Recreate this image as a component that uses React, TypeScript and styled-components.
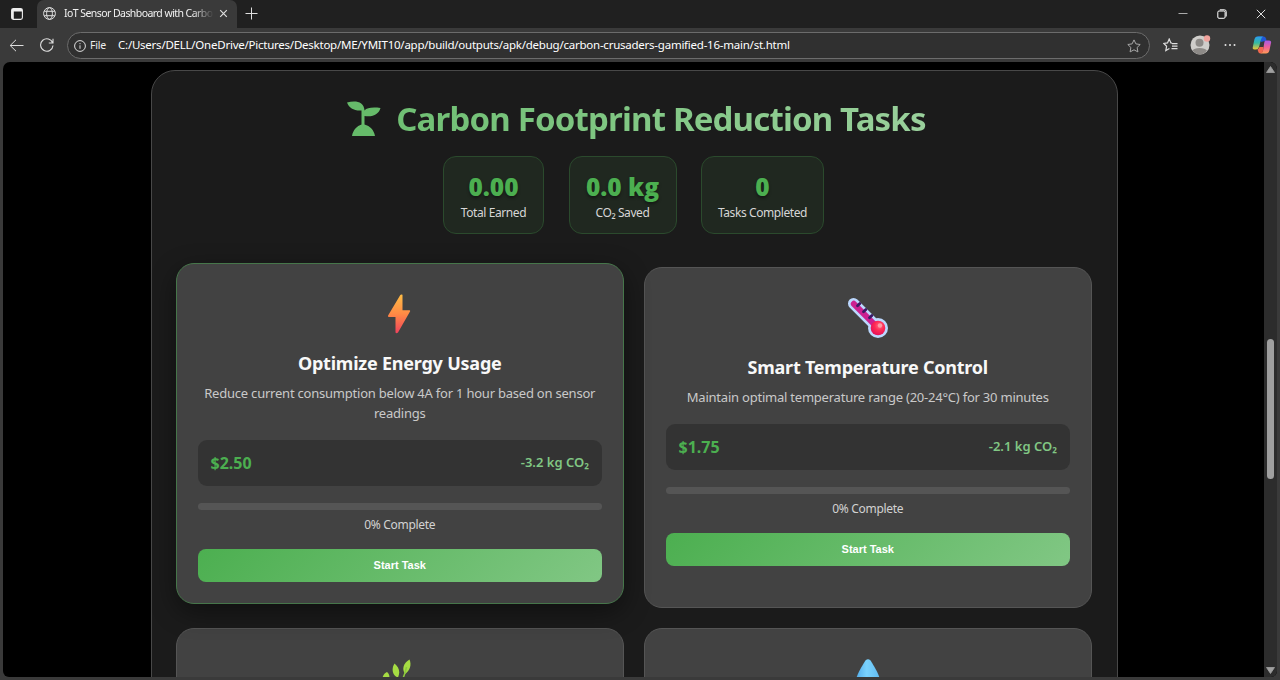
import React from "react";
import styled, { createGlobalStyle } from "styled-components";

const Global = createGlobalStyle`
  *, *::before, *::after { box-sizing: border-box; }
  html, body { margin: 0; padding: 0; background: #3b3b3b; overflow: hidden; }
  body { font-family: "Noto Sans", "Open Sans", sans-serif; color: #fff; }
  svg { display: block; flex: none; }
`;

const Window = styled.div`
  width: 1280px;
  height: 680px;
  display: flex;
  flex-direction: column;
  background: #3a3a3a;
  overflow: hidden;
`;

const TabStrip = styled.div`
  height: 28px;
  flex: none;
  display: flex;
  align-items: stretch;
  background: #202020;
`;

const TabMenu = styled.div`
  width: 37px;
  display: flex;
  align-items: center;
  padding-left: 11px;
`;

const Tab = styled.div`
  width: 200px;
  display: flex;
  align-items: center;
  padding: 0 9px 1px 6px;
  background: #3a3a3a;
  border-radius: 7px 7px 0 0;
`;

const TabTitle = styled.div`
  width: 149px;
  margin: 0 0 1px 8px;
  overflow: hidden;
  white-space: nowrap;
  font-size: 10.5px;
  line-height: 16px;
  letter-spacing: -0.56px;
  color: #f2f2f2;
  mask-image: linear-gradient(90deg, #000 128px, transparent 150px);
`;

const TabClose = styled.div`
  margin-left: auto;
`;

const NewTab = styled.div`
  display: flex;
  align-items: center;
  padding: 0 0 1px 8px;
`;

const WindowControls = styled.div`
  margin-left: auto;
  display: flex;
  align-items: center;
  gap: 29px;
  padding-right: 14px;
`;

const Toolbar = styled.div`
  height: 34px;
  flex: none;
  display: flex;
  align-items: center;
  padding-left: 9px;
`;

const AddressBar = styled.div`
  width: 1083px;
  height: 27px;
  margin: 1px 0 0 12px;
  display: flex;
  align-items: center;
  padding: 0 8px 0 6px;
  border: 1px solid #6c6c6c;
  border-radius: 14px;
  background: #303030;
`;

const Scheme = styled.span`
  width: 28px;
  margin: 0 0 1px 4px;
  font-size: 10.5px;
  letter-spacing: -0.2px;
  line-height: 18px;
  color: #ededed;
`;

const Url = styled.span`
  flex: 1;
  margin-bottom: 1px;
  font-size: 11.5px;
  line-height: 18px;
  letter-spacing: -0.237px;
  white-space: nowrap;
  color: #fff;
`;

const ToolbarActions = styled.div`
  display: flex;
  align-items: center;
  margin-left: 13px;
`;

const Avatar = styled.div`
  margin-left: 12px;
`;

const More = styled.div`
  margin-left: 13px;
`;

const Assistant = styled.div`
  margin-left: 16px;
`;

const Viewport = styled.div`
  height: 615px;
  margin: 0 3px;
  display: flex;
  background: #000;
  border-radius: 7px 7px 6px 6px;
  overflow: hidden;
`;

const Page = styled.main`
  flex: 1;
  padding: 8px 0 0 148px;
  overflow: hidden;
`;

const Scrollbar = styled.div`
  width: 13px;
  display: flex;
  flex-direction: column;
  align-items: center;
  padding: 4px 0 3px;
  background: #2c2c2c;
`;

const Thumb = styled.div`
  width: 7px;
  height: 140px;
  margin: 266px 0 auto;
  border-radius: 4px;
  background: #9f9f9f;
`;

const Panel = styled.section`
  width: 967px;
  height: 700px;
  padding: 23px 25px 0 24px;
  border: 1px solid #484848;
  border-radius: 24px;
  background: #1b1b1b;
`;

const Heading = styled.h1`
  margin: 0;
  height: 49px;
  display: flex;
  justify-content: center;
  align-items: center;
  gap: 15px;
  padding-left: 5px;
  font-size: 33px;
  line-height: 48px;
  font-weight: 700;
  letter-spacing: -0.83px;
  white-space: nowrap;
`;

const HeadingText = styled.span`
  color: transparent;
  background: linear-gradient(100deg, #6fbf73 0%, #81c784 45%, #9ad09c 100%);
  background-clip: text;
  -webkit-background-clip: text;
`;

const Stats = styled.div`
  display: flex;
  justify-content: center;
  gap: 24.5px;
  margin-top: 13px;
  padding-right: 1px;
`;

const Stat = styled.div<{ $width: number }>`
  width: ${(p) => p.$width}px;
  height: 78px;
  padding-top: 13px;
  text-align: center;
  border: 1px solid #2b4a2d;
  border-radius: 13px;
  background: #202820;
`;

const StatValue = styled.div`
  font-family: "Open Sans", sans-serif;
  font-size: 24.5px;
  line-height: 34px;
  font-weight: 800;
  color: #4caf50;
  text-shadow: 0 2px 3px rgba(0, 0, 0, 0.4);
`;

const StatLabel = styled.div`
  font-size: 12px;
  line-height: 17px;
  letter-spacing: -0.42px;
  color: #d6d6d6;
`;

const Grid = styled.div`
  display: grid;
  grid-template-columns: 448px 448px;
  grid-auto-rows: 341px;
  gap: 20px;
  margin-top: 33px;
`;

const Card = styled.article<{ $raised?: boolean }>`
  padding: 20px 21px 20px 20.5px;
  text-align: center;
  border: 1px solid ${(p) => (p.$raised ? "#46764a" : "#555")};
  border-radius: 18px;
  background: #424242;
  box-shadow: ${(p) => (p.$raised ? "0 8px 26px rgba(0, 0, 0, 0.42)" : "none")};
  transform: ${(p) => (p.$raised ? "translateY(-4px)" : "none")};
`;

const CardIcon = styled.div`
  height: 60px;
  display: flex;
  justify-content: center;
  align-items: center;
`;

const CardTitle = styled.h3`
  margin: 6px 0 0;
  font-size: 18px;
  line-height: 26px;
  font-weight: 700;
  letter-spacing: -0.22px;
  color: #f8f8f8;
`;

const CardText = styled.p`
  margin: 7px 0 0;
  font-size: 13px;
  line-height: 20px;
  letter-spacing: -0.22px;
  color: #c9c9c9;
`;

const Reward = styled.div`
  height: 46px;
  margin-top: 17px;
  padding: 0 13px 0 13px;
  display: flex;
  justify-content: space-between;
  align-items: center;
  border-radius: 9px;
  background: #333;
`;

const Price = styled.span`
  font-size: 16px;
  line-height: 22px;
  font-weight: 700;
  color: #4caf50;
`;

const Saving = styled.span`
  margin-bottom: 2px;
  font-size: 13px;
  line-height: 18px;
  font-weight: 600;
  color: #81c784;
`;

const Track = styled.div`
  height: 7px;
  margin-top: 17px;
  border-radius: 4px;
  background: #555;
`;

const Status = styled.div`
  margin-top: 6px;
  font-size: 12px;
  line-height: 18px;
  letter-spacing: -0.31px;
  color: #d2d2d2;
`;

const StartButton = styled.button`
  display: block;
  width: 100%;
  height: 33px;
  margin-top: 15px;
  padding: 0 0 1px;
  border: 0;
  border-radius: 8px;
  background: linear-gradient(135deg, #4caf50, #81c784);
  color: #fff;
  font: 700 11px "Liberation Sans", sans-serif;
`;

const Sprout = () => (
  <svg width="34" height="36" viewBox="0 0 34 36">
    <path
      fill="#66bb6a"
      d="M0 1.500C8-.5 17 0 17.500 9.500C20 6.500 26 6 33.500 7C32 13 26 16.500 17.500 15V23.500C23 25 27 29 28 35H5C6 29 10 25 14.500 23.500V9.500C7 10 2 7 0 1.500Z"
    />
  </svg>
);

const Bolt = () => (
  <svg width="26" height="40" viewBox="0 0 26 40">
    <defs>
      <linearGradient id="bolt" x1="0" y1="0" x2="0" y2="1">
        <stop offset="0" stopColor="#ffbd45" />
        <stop offset=".5" stopColor="#ff8a45" />
        <stop offset="1" stopColor="#f0425c" />
      </linearGradient>
    </defs>
    <path
      fill="url(#bolt)"
      d="M13 1.500Q14-.3 15.500 .8V16.300H22.500Q23.500 16.500 23 17.600L11 38.500Q9.500 40 8.500 38.600V23H1.700Q.5 22.600 1.100 21.400Z"
    />
  </svg>
);

const Thermometer = () => (
  <svg width="42" height="42" viewBox="0 0 42 42">
    <defs>
      <radialGradient id="bulb" cx=".6" cy=".35" r=".65">
        <stop offset="0" stopColor="#ff6f85" />
        <stop offset=".5" stopColor="#ff2a55" />
        <stop offset="1" stopColor="#e51259" />
      </radialGradient>
    </defs>
    <path d="M6.500 6.500L27 27" stroke="#bcd8ff" strokeWidth="11" strokeLinecap="round" />
    <circle cx="31" cy="31" r="10" fill="#bcd8ff" />
    <path d="M6.800 6.800L28 28" stroke="#cb2190" strokeWidth="6" strokeLinecap="round" />
    <circle cx="31" cy="31" r="7.300" fill="url(#bulb)" />
    <circle cx="33" cy="28.500" r="2.200" fill="#ff9aa6" />
    <path d="M10.500 8.800l2.400-2.400M16.500 14.800l2.400-2.400M22.500 20.800l2.400-2.400" stroke="#3b1a66" strokeWidth="2.800" strokeLinecap="round" />
  </svg>
);

const Herb = () => (
  <svg width="40" height="40" viewBox="0 0 40 40">
    <g fill="#a6dc43">
      <path d="M29.500 .5C32 6 29.500 12 25 15C21.500 10 23.500 4 29.500 .5Z" />
      <path d="M14.500 4.500C19 8 20.500 13 18 18.500C12.500 17 11 10 14.500 4.500Z" />
      <path d="M2.500 19C3 15.500 5 14 7 13C9.500 15 10 18 9 22Z" />
      <path d="M24 24C29 19 35 19 38 21C35 26 29 27 24 24Z" />
      <path d="M6 29C11 25 16 26 18 29C14 33 9 33 6 29Z" />
    </g>
    <path d="M26.500 8C25 16 21 28 7 39" fill="none" stroke="#8cc83e" strokeWidth="1.500" />
  </svg>
);

const Drop = () => (
  <svg width="40" height="40" viewBox="0 0 40 40">
    <defs>
      <linearGradient id="drop" x1="0" y1="0" x2="1" y2="0">
        <stop offset="0" stopColor="#4fa9e8" />
        <stop offset=".45" stopColor="#7ad2fd" />
        <stop offset="1" stopColor="#5fb9ef" />
      </linearGradient>
    </defs>
    <path fill="url(#drop)" d="M17.500 1.500Q20-.8 22.500 1.500C25.500 6 33 18 33 26A13 13 0 0 1 7 26C7 18 14.500 6 17.500 1.500Z" />
  </svg>
);

const line = { fill: "none", stroke: "#dedede", strokeWidth: 1 };
const star = "M7 .9L8.900 4.900L13.200 5.500L10.100 8.500L10.900 12.900L7 10.800L3.100 12.900L3.900 8.500L.8 5.500L5.100 4.900Z";

const BrowserChrome = () => (
  <>
    <TabStrip>
      <TabMenu>
        <svg width="12" height="12" viewBox="0 0 12 12">
          <rect x=".6" y=".6" width="10.800" height="10.800" rx="1.800" fill="none" stroke="#eee" strokeWidth="1.100" />
          <path d="M.8 1H11.200V3.400H.8ZM.8 3.300H2.800V11H.8Z" fill="#eee" />
        </svg>
      </TabMenu>
      <Tab>
        <svg width="13" height="13" viewBox="0 0 13 13" {...line}>
          <circle cx="6.500" cy="6.500" r="5.900" />
          <ellipse cx="6.500" cy="6.500" rx="2.900" ry="5.900" />
          <path d="M1.200 4.300H11.800M1.200 8.700H11.800" />
        </svg>
        <TabTitle>IoT Sensor Dashboard with Carbo</TabTitle>
        <TabClose>
          <svg width="9" height="9" viewBox="0 0 9 9" {...line}>
            <path d="M1.200 1.200L7.800 7.800M7.800 1.200L1.200 7.800" strokeWidth="1.200" />
          </svg>
        </TabClose>
      </Tab>
      <NewTab>
        <svg width="13" height="13" viewBox="0 0 13 13" {...line}>
          <path d="M6.500 .5V12.500M.5 6.500H12.500" />
        </svg>
      </NewTab>
      <WindowControls>
        <svg width="10" height="10" viewBox="0 0 10 10" {...line}>
          <path d="M.5 4.500H9.500" stroke="#aaa" />
        </svg>
        <svg width="10" height="10" viewBox="0 0 10 10" {...line} stroke="#fff">
          <rect x=".8" y="2" width="7.300" height="7.300" rx="1.200" />
          <path d="M2.800 .8H7.400Q9.200 .8 9.200 2.600V7.500" />
        </svg>
        <svg width="10" height="10" viewBox="0 0 10 10" {...line}>
          <path d="M.8 .8L9.200 9.200M9.200 .8L.8 9.200" />
        </svg>
      </WindowControls>
    </TabStrip>
    <Toolbar>
      <svg width="15" height="13" viewBox="0 0 15 13" {...line}>
        <path d="M14.500 6.500H1.200M7 .8L1.200 6.500L7 12.200" />
      </svg>
      <svg width="31" height="14" viewBox="-15.500 0 31 14" {...line}>
        <path d="M13.200 5A6.200 6.200 0 1 0 13.500 7.500M13.500 .8V5H9.300" strokeWidth="1.100" />
      </svg>
      <AddressBar>
        <svg width="12" height="12" viewBox="0 0 12 12" {...line}>
          <circle cx="6" cy="6" r="5.400" />
          <path d="M6 5.300V8.800M6 3.100V4.200" />
        </svg>
        <Scheme>File</Scheme>
        <Url>
          C:/Users/DELL/OneDrive/Pictures/Desktop/ME/YMIT10/app/build/outputs/apk/debug/carbon-crusaders-gamified-16-main/st.html
        </Url>
        <svg width="14" height="14" viewBox="0 0 14 14" {...line} stroke="#a8a8a8">
          <path d={star} />
        </svg>
      </AddressBar>
      <ToolbarActions>
        <svg width="15" height="14" viewBox="0 0 15 14" {...line} strokeWidth="1.200">
          <path d="M9 5.200L7.900 4.900L6.200 1L4.500 4.900L.8 5.500L3.600 8.300L2.800 12.600L6.400 10.600M9 5.600H14.500M9 8.100H14.500M8.500 10.600H14.500" />
        </svg>
        <Avatar>
          <svg width="21" height="20" viewBox="0 0 21 20">
            <circle cx="10" cy="10" r="9.500" fill="#cfcdca" />
            <circle cx="9.500" cy="7.700" r="4" fill="#8d8a87" />
            <path d="M2.500 15.500Q4 13 9.500 13T17 15.500Q14 19.500 10 19.500T2.500 15.500Z" fill="#8d8a87" />
            <circle cx="17" cy="3.500" r="3.200" fill="#f0a29c" />
          </svg>
        </Avatar>
        <More>
          <svg width="12" height="4" viewBox="0 0 12 4" fill="#e4e4e4">
            <circle cx="1.500" cy="2" r="1" />
            <circle cx="6" cy="2" r="1" />
            <circle cx="10.500" cy="2" r="1" />
          </svg>
        </More>
        <Assistant>
          <svg width="20" height="18" viewBox="0 0 20 18">
            <defs>
              <linearGradient id="cool" x1="0" y1="0" x2="0" y2="1">
                <stop offset="0" stopColor="#2b9df0" />
                <stop offset=".5" stopColor="#35b9a0" />
                <stop offset="1" stopColor="#f0c435" />
              </linearGradient>
              <linearGradient id="warm" x1="0" y1="0" x2="0" y2="1">
                <stop offset="0" stopColor="#a65be8" />
                <stop offset=".5" stopColor="#f0609a" />
                <stop offset="1" stopColor="#ff9a55" />
              </linearGradient>
            </defs>
            <path d="M6 .5H11.500Q13.500 .5 14 2.500L14.500 4.500L9 6Z" fill="#2158d6" />
            <path d="M5 .5H11Q9.500 1.500 9 3.500L7 11Q6.200 13.500 4 13.500H2.500Q.3 13.500 .8 11L2.500 3Q3.200 .5 5 .5Z" fill="url(#cool)" />
            <path d="M13.500 4.500H17Q19.600 4.500 19 7L17.400 14.500Q16.700 17.500 14 17.500H8.500Q10.500 16.500 11 14.500L12.300 6.500Q12.600 4.500 13.500 4.500Z" fill="url(#warm)" />
            <path d="M5.500 13.500Q7 12.500 7.500 11H11.500L11 14.500Q10.500 17.500 8.500 17.500Q6.500 17.500 6.200 15.500Z" fill="#f2684f" />
          </svg>
        </Assistant>
      </ToolbarActions>
    </Toolbar>
  </>
);

interface Task {
  icon: React.ReactNode;
  title: string;
  text: string;
  price: string;
  saving: string;
  raised?: boolean;
}

const tasks: Task[] = [
  {
    icon: <Bolt />,
    title: "Optimize Energy Usage",
    text: "Reduce current consumption below 4A for 1 hour based on sensor readings",
    price: "$2.50",
    saving: "-3.2 kg CO₂",
    raised: true,
  },
  {
    icon: <Thermometer />,
    title: "Smart Temperature Control",
    text: "Maintain optimal temperature range (20-24°C) for 30 minutes",
    price: "$1.75",
    saving: "-2.1 kg CO₂",
  },
];

const upcoming = [<Herb key="herb" />, <Drop key="drop" />];

export default function App() {
  return (
    <Window>
      <Global />
      <BrowserChrome />
      <Viewport>
        <Page>
          <Panel>
            <Heading>
              <Sprout />
              <HeadingText>Carbon Footprint Reduction Tasks</HeadingText>
            </Heading>
            <Stats>
              <Stat $width={101}>
                <StatValue>0.00</StatValue>
                <StatLabel>Total Earned</StatLabel>
              </Stat>
              <Stat $width={108}>
                <StatValue>0.0 kg</StatValue>
                <StatLabel>CO₂ Saved</StatLabel>
              </Stat>
              <Stat $width={123}>
                <StatValue>0</StatValue>
                <StatLabel>Tasks Completed</StatLabel>
              </Stat>
            </Stats>
            <Grid>
              {tasks.map((t) => (
                <Card key={t.title} $raised={t.raised}>
                  <CardIcon>{t.icon}</CardIcon>
                  <CardTitle>{t.title}</CardTitle>
                  <CardText>{t.text}</CardText>
                  <Reward>
                    <Price>{t.price}</Price>
                    <Saving>{t.saving}</Saving>
                  </Reward>
                  <Track />
                  <Status>0% Complete</Status>
                  <StartButton>Start Task</StartButton>
                </Card>
              ))}
              {upcoming.map((icon, i) => (
                <Card key={i}>
                  <CardIcon>{icon}</CardIcon>
                </Card>
              ))}
            </Grid>
          </Panel>
        </Page>
        <Scrollbar>
          <svg width="9" height="7" viewBox="0 0 9 7">
            <path d="M4.500 .5L8.500 6.500H.5Z" fill="#a0a0a0" stroke="#a0a0a0" strokeLinejoin="round" strokeWidth=".8" />
          </svg>
          <Thumb />
          <svg width="9" height="7" viewBox="0 0 9 7">
            <path d="M4.500 6.500L.5 .5H8.500Z" fill="#a0a0a0" stroke="#a0a0a0" strokeLinejoin="round" strokeWidth=".8" />
          </svg>
        </Scrollbar>
      </Viewport>
    </Window>
  );
}
